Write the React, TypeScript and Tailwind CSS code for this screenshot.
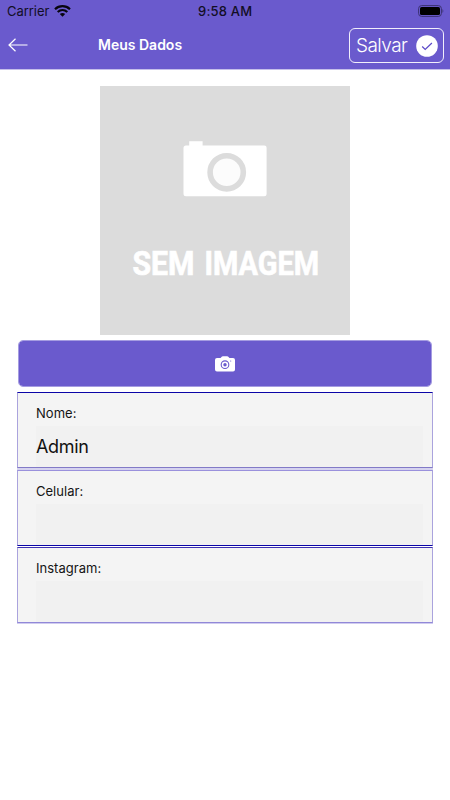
function StatusBar() {
  return (
    <div className="flex h-[23px] items-center text-[13px] leading-[23px] text-[#120e25]">
      <div className="flex w-[198px] items-center pl-[7px]">
        <span className="w-[47px] tracking-[-0.05px]">Carrier</span>
        <svg className="-mt-px" width="17" height="12" viewBox="0 0 17 12" fill="none" stroke="#07050f" strokeWidth="2.2">
          <path d="M1 4.2C5.2.2 11.8.2 16 4.2" />
          <path d="M3.7 7C6.5 4.5 10.5 4.5 13.3 7" />
          <path d="M8.5 11.7 5.8 9Q8.5 6.9 11.2 9Z" fill="#07050f" stroke="none" />
        </svg>
      </div>
      <span className="font-medium tracking-[0.2px]">9:58 AM</span>
      <svg className="-mt-px mr-[6px] ml-auto" width="26" height="12" viewBox="0 0 26 12">
        <rect x="0.6" y="0.6" width="22.8" height="10.8" rx="3" fill="none" stroke="#3a3170" />
        <rect x="2" y="2" width="20" height="8" rx="1.6" fill="#000" />
        <path d="M24.5 4q1.6 2 0 4z" fill="#3a3170" />
      </svg>
    </div>
  );
}

function Header() {
  return (
    <header className="h-[70px] border-b border-[#c5bfea] bg-[#6a5acd]">
      <StatusBar />
      <div className="flex h-[46px] items-center pr-[6px] pl-[8px]">
        <svg className="-mt-[3px]" width="20" height="14" viewBox="0 0 20 14" fill="none" stroke="#fff" strokeWidth="1.2">
          <path d="M7.5.7 1 7l6.5 6.3M1 7h18.5" />
        </svg>
        <h1 className="-mt-[2px] ml-[70px] text-[14px] leading-5 font-semibold whitespace-nowrap text-white">
          Meus Dados
        </h1>
        <button className="-mt-[1px] ml-auto flex h-[35px] w-[95px] items-center justify-between rounded-[6px] border-[1.5px] border-[#f1effb] pr-[5px] pl-[6px] text-white">
          <span className="text-[19px] leading-6 font-light tracking-[-0.55px]">Salvar</span>
          <svg width="22" height="22" viewBox="0 0 22 22">
            <circle cx="11" cy="11" r="10.8" fill="#fff" />
            <path d="m6.2 11.5 3 3 6.7-6.5" fill="none" stroke="#5b49c8" strokeWidth="1.2" />
          </svg>
        </button>
      </div>
    </header>
  );
}

function PhotoPlaceholder() {
  return (
    <svg className="mx-auto mt-4 block" width="250" height="249" viewBox="0 0 250 249">
      <rect width="250" height="249" fill="#dcdcdc" />
      <path
        d="M86 59.5h3.2V55.2h13.4v4.3h61.5a2.5 2.5 0 0 1 2.5 2.5v45.8a2.5 2.5 0 0 1-2.5 2.5H86a2.5 2.5 0 0 1-2.5-2.5V62a2.5 2.5 0 0 1 2.5-2.5Z"
        fill="#fff"
      />
      <circle cx="126.700" cy="86.300" r="16.600" fill="#fcfcfc" stroke="#dcdcdc" strokeWidth="5.600" />
      <g fill="#fff" stroke="#fff" strokeWidth="0.700" fontFamily="Roboto, sans-serif" fontWeight="700" fontSize="34">
        <text x="32.500" y="188.800" textLength="62" lengthAdjust="spacingAndGlyphs">SEM</text>
        <text x="104.500" y="188.800" textLength="114.500" lengthAdjust="spacingAndGlyphs">IMAGEM</text>
      </g>
    </svg>
  );
}

function CameraButton() {
  return (
    <button className="mt-[5px] ml-[18px] flex h-[47px] w-[414px] items-center justify-center rounded-[5px] border border-[#a59ce1] bg-[#6a5acd] bg-clip-padding">
      <svg className="mt-[1px]" width="20" height="16" viewBox="0 0 20 16">
        <path
          d="M2 2h3.500L7 .6Q7.400.2 8 .2h4q.6 0 1 .4L14.500 2H18q2 0 2 2v9.500q0 2-2 2H2q-2 0-2-2V4q0-2 2-2Z"
          fill="#fff"
        />
        <circle cx="10" cy="8.700" r="3.800" fill="none" stroke="#6a5acd" strokeWidth="1.100" />
        <circle cx="10" cy="8.700" r="1.700" fill="#6a5acd" />
        <circle cx="15.700" cy="5" r=".6" fill="#6a5acd" />
      </svg>
    </button>
  );
}

function Field({ label, value, className }: { label: string; value?: string; className: string }) {
  return (
    <div className={`ml-[17px] w-[416px] border bg-[#f4f4f4] pl-[18px] ${className}`}>
      <div className="pt-[10px] text-[13px] leading-5 tracking-[0.02px] text-[#151515]">{label}</div>
      <div className="mt-[3px] h-[41px] w-[387px] bg-[#f1f1f1] text-[18px] leading-[41px] tracking-[-0.3px] text-[#111]">{value}</div>
    </div>
  );
}

export default function App() {
  return (
    <main className="h-[800px] w-[450px] overflow-hidden bg-white font-['Inter',sans-serif]">
      <Header />
      <PhotoPlaceholder />
      <CameraButton />
      <div className="mt-[5px]">
        <Field label="Nome:" value="Admin" className="h-[76px] border-x-[#aaa3dd] border-t-[#0b05a7] border-b-[#827ac7]" />
        <div className="ml-[17px] h-[2px] w-[416px] bg-[#d5d2ef]" />
        <Field label="Celular:" className="h-[76px] border-x-[#aaa3dd] border-t-[#9a91dc] border-b-[#0b05a7]" />
        <div className="h-px" />
        <Field label="Instagram:" className="h-[76px] border-x-[#aaa3dd] border-t-[#3c30b2] border-b-[#9188d8]" />
        <div className="ml-[17px] h-px w-[416px] bg-[#d0ccef]" />
      </div>
    </main>
  );
}
